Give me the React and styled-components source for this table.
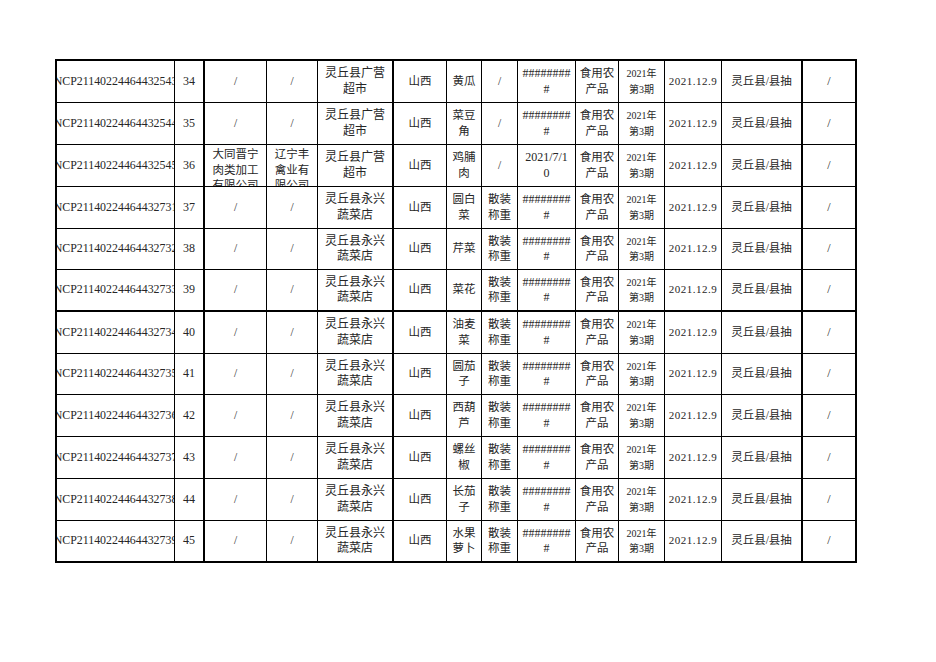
import React from "react";
import styled, { createGlobalStyle } from "styled-components";

const Global = createGlobalStyle`
  html, body { margin: 0; padding: 0; background: #fff; }
  body { font-family: "Liberation Serif", "Noto Sans CJK SC", serif; color: #222; }
`;

const COLS = [118, 30, 62, 51, 76, 53, 35, 36, 58, 43, 46, 57, 81, 54];
const ROWS = [42, 42, 42, 42, 41, 42, 42, 41, 42, 42, 42, 42];
const THICK_COLS = new Set([1, 4, 12, 13]);
const THICK_ROWS = new Set([5, 11]);
const SIZES = [11.9, 12, 11.5, 11.5, 12, 11.5, 11.5, 11.5, 12, 11.5, 10, 11, 11.5, 12];

const Page = styled.div`
  padding: 59px 0 0 55px;
  width: 936px;
  height: 662px;
  box-sizing: border-box;
`;

const Sheet = styled.div`
  display: grid;
  grid-template-columns: ${COLS.map((c) => c + "px").join(" ")};
  grid-template-rows: ${ROWS.map((r) => r + "px").join(" ")};
  width: max-content;
  border-top: 2px solid #000;
  border-left: 2px solid #000;
`;

const Cell = styled.div`
  box-sizing: border-box;
  display: flex;
  flex-direction: column;
  align-items: center;
  justify-content: ${(p) => (p.$top ? "flex-start" : "center")};
  padding-top: ${(p) => (p.$top ? "2px" : "0")};
  overflow: hidden;
  text-align: center;
  border-right: ${(p) => (p.$thickRight ? "2px" : "1px")} solid #000;
  border-bottom: ${(p) => (p.$thickBottom ? "2px" : "1px")} solid #000;
  font-size: ${(p) => p.$size}px;
  letter-spacing: ${(p) => p.$spacing || 0}px;
  line-height: 15.5px;
  color: #262626;
`;

const Line = styled.span`
  display: block;
  white-space: nowrap;
  flex-shrink: 0;
`;

const shopA = ["灵丘县广营", "超市"];
const shopB = ["灵丘县永兴", "蔬菜店"];
const hash = ["########", "#"];
const loose = ["散装", "称重"];

const data = [
  ["NCP21140224464432543", "34", ["/"], ["/"], shopA, ["黄瓜"], ["/"], hash],
  ["NCP21140224464432544", "35", ["/"], ["/"], shopA, ["菜豆", "角"], ["/"], hash],
  ["NCP21140224464432545", "36", ["大同晋宁", "肉类加工", "有限公司"], ["辽宁丰", "禽业有", "限公司"], shopA, ["鸡脯", "肉"], ["/"], ["2021/7/1", "0"]],
  ["NCP21140224464432731", "37", ["/"], ["/"], shopB, ["圆白", "菜"], loose, hash],
  ["NCP21140224464432732", "38", ["/"], ["/"], shopB, ["芹菜"], loose, hash],
  ["NCP21140224464432733", "39", ["/"], ["/"], shopB, ["菜花"], loose, hash],
  ["NCP21140224464432734", "40", ["/"], ["/"], shopB, ["油麦", "菜"], loose, hash],
  ["NCP21140224464432735", "41", ["/"], ["/"], shopB, ["圆茄", "子"], loose, hash],
  ["NCP21140224464432736", "42", ["/"], ["/"], shopB, ["西葫", "芦"], loose, hash],
  ["NCP21140224464432737", "43", ["/"], ["/"], shopB, ["螺丝", "椒"], loose, hash],
  ["NCP21140224464432738", "44", ["/"], ["/"], shopB, ["长茄", "子"], loose, hash],
  ["NCP21140224464432739", "45", ["/"], ["/"], shopB, ["水果", "萝卜"], loose, hash],
];

function rowCells(r) {
  const [id, no, maker, makerB, shop, food, pack, date] = r;
  return [
    [id],
    [no],
    maker,
    makerB,
    shop,
    ["山西"],
    food,
    pack,
    date,
    ["食用农", "产品"],
    ["2021年", "第3期"],
    ["2021.12.9"],
    ["灵丘县/县抽"],
    ["/"],
  ];
}

export default function App() {
  return (
    <>
      <Global />
      <Page>
        <Sheet>
          {data.map((r, ri) =>
            rowCells(r).map((lines, ci) => (
              <Cell
                key={ri + "-" + ci}
                $thickRight={THICK_COLS.has(ci)}
                $thickBottom={THICK_ROWS.has(ri)}
                $size={SIZES[ci]}
                $spacing={ci === 11 ? 0.5 : 0}
                $top={lines.length > 2}
              >
                {lines.map((l, li) => (
                  <Line key={li}>{l}</Line>
                ))}
              </Cell>
            ))
          )}
        </Sheet>
      </Page>
    </>
  );
}
